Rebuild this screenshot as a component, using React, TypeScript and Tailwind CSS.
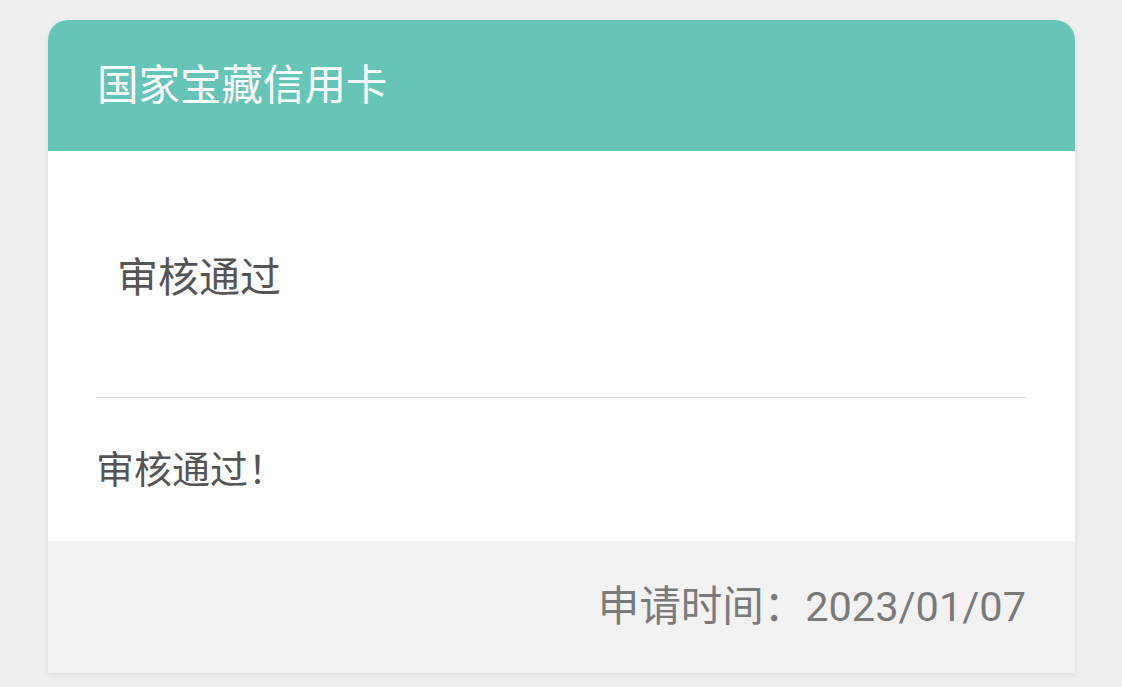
export default function App() {
  return (
    <div className="min-h-[687px] w-full bg-[#efefef] pt-[20px] pl-[48px] font-['Roboto','Noto_Sans_CJK_SC',sans-serif]">
      <div className="w-[1027px] overflow-hidden rounded-t-[20px] bg-white shadow-[0_2px_6px_rgba(0,0,0,0.08)]">
        <div className="flex h-[131px] items-center bg-[#66c5b7] px-[49px]">
          <span className="text-[41.5px] leading-none text-white">国家宝藏信用卡</span>
        </div>
        <div className="px-[48px]">
          <div className="flex h-[246px] items-center pl-[21px] pt-[8px]">
            <span className="text-[41px] leading-none text-[#555]">审核通过</span>
          </div>
          <div className="h-px bg-[#dcdcdc]" />
          <div className="flex h-[143px] items-center">
            <span className="text-[38px] leading-none text-[#555]">审核通过！</span>
          </div>
        </div>
        <div className="flex h-[132px] items-center justify-end bg-[#f2f2f2] pr-[49px]">
          <span className="text-[41.5px] leading-none text-[#7a7a7a]">申请时间：2023/01/07</span>
        </div>
      </div>
    </div>
  )
}
